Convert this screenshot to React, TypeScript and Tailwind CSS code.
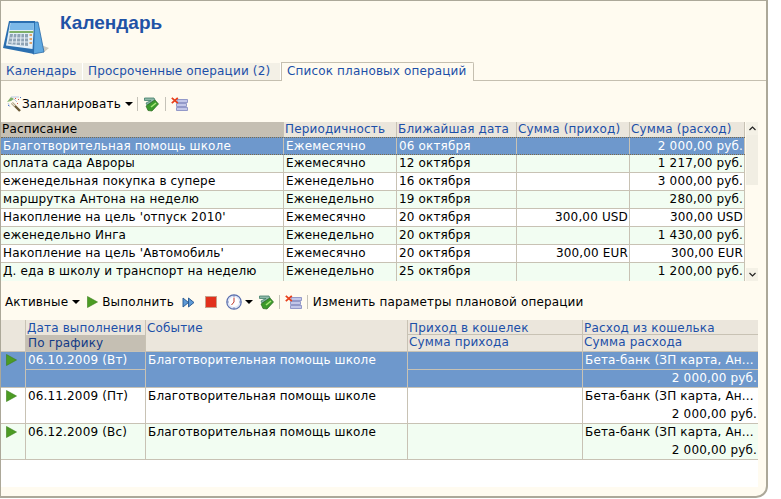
import React from "react"

const uiFont = "font-['DejaVu_Sans',Verdana,sans-serif] tracking-[0.15px]"

const planColumns = ["w-[283px]", "w-[113px]", "w-[120px]", "w-[113px]", "w-[115px]"]

const planRows = [
  ["Благотворительная помощь школе", "Ежемесячно", "06 октября", "", "2 000,00 руб."],
  ["оплата сада Авроры", "Ежемесячно", "12 октября", "", "1 217,00 руб."],
  ["еженедельная покупка в супере", "Еженедельно", "16 октября", "", "3 000,00 руб."],
  ["маршрутка Антона на неделю", "Еженедельно", "19 октября", "", "280,00 руб."],
  ["Накопление на цель 'отпуск 2010'", "Ежемесячно", "20 октября", "300,00 USD", "300,00 USD"],
  ["еженедельно Инга", "Еженедельно", "20 октября", "", "1 430,00 руб."],
  ["Накопление на цель 'Автомобиль'", "Ежемесячно", "20 октября", "300,00 EUR", "300,00 EUR"],
  ["Д. еда в школу и транспорт на неделю", "Еженедельно", "25 октября", "", "1 200,00 руб."],
]

const runRows = [
  { date: "06.10.2009 (Вт)", selected: true, bg: "bg-[#6e98cc] text-white" },
  { date: "06.11.2009 (Пт)", selected: false, bg: "bg-white text-black" },
  { date: "06.12.2009 (Вс)", selected: false, bg: "bg-[#f2fdf2] text-black" },
]

function CalendarIcon() {
  return (
    <svg width="48" height="40" viewBox="0 0 48 40" className="shrink-0">
      <path d="M38 27 L46 30 L40 35 Z" fill="#cfcabd" />
      <path d="M30 4 L35 4 L41 34 L30 36 Z" fill="#5fa8e0" stroke="#2a6aa8" strokeWidth="0.8" />
      <path d="M6 3 L32 3 L31 36 L0 30 Z" fill="#2b6fb0" />
      <path d="M7 5 L31 5 L29.5 31 L3 27.5 Z" fill="#e4f0f8" />
      <path d="M7.5 5 L31 5 L30.5 12 L6.5 12 Z" fill="#7cb9e8" />
      <path d="M6.5 13 L30.5 13 L30.4 15 L6.3 15 Z" fill="#7fb069" />
      <path d="M7 16 L25 16 L25 28 L5 26 Z" fill="#8ea3b5" />
      <path d="M10.5 16 L9 26 M14 16 L13 27 M18 16 L17.5 27 M21.5 16 L21.5 28 M6.5 20 L25 20 M6 24 L25 24" stroke="#e6eef5" strokeWidth="1" />
      <path d="M26.5 17 L29 17 M26.5 21 L29 21 M26.5 25 L29 25" stroke="#e08a3c" strokeWidth="1.4" />
    </svg>
  )
}

function WandIcon() {
  return (
    <svg width="16" height="16" viewBox="0 0 16 16" className="shrink-0">
      <path d="M6 7 L14 15" stroke="#6b5a36" strokeWidth="2.4" />
      <path d="M6 7 L9 10" stroke="#e8e0c8" strokeWidth="1.6" />
      <path d="M1 6 L5 1 L8 3 L5 5 Z" fill="#7fb069" />
      <path d="M5 1 L13 1 M8 3 L11 6 M2 7 L4 11" stroke="#b9c6e4" strokeWidth="1" />
      <path d="M9 2 h1 v1 h-1 Z M12 3 h1 v1 h-1 Z M11 7 h1 v1 h-1 Z" fill="#d9534f" />
      <path d="M2 9 h1 v1 h-1 Z M14 1 h1 v1 h-1 Z" fill="#4a78c4" />
    </svg>
  )
}

function CheckBookIcon() {
  return (
    <svg width="16" height="16" viewBox="0 0 16 16" className="shrink-0">
      <path d="M1.5 2 H11 L12 4 L5.5 8 L9 8 L4 9 L3 7 L8 4.5 H1.5 Z" fill="#8fb8a8" stroke="#3f7f68" strokeWidth="0.8" />
      <path d="M3 10 L12 4 L15.5 8 L9 15 L5 14.5 Z" fill="#3c9a2c" stroke="#2c6a22" strokeWidth="0.7" />
      <path d="M8 11 L13 7" fill="none" stroke="#a8e878" strokeWidth="1.6" />
    </svg>
  )
}

function DeleteListIcon() {
  return (
    <svg width="17" height="15" viewBox="0 0 17 15" className="shrink-0">
      <path d="M6 2.5 H16.5 V5.5 H6 Z" fill="#c2c6e8" stroke="#7f86c0" strokeWidth="0.8" />
      <path d="M5.5 6.5 H15.5 V9.5 H5.5 Z" fill="#c2c6e8" stroke="#7f86c0" strokeWidth="0.8" />
      <path d="M5.5 10.5 H16.5 V13.5 H5.5 Z" fill="#c2c6e8" stroke="#7f86c0" strokeWidth="0.8" />
      <path d="M0.8 0.8 L6.8 6.2 M6.8 0.8 L0.8 6.2" stroke="#e8401c" strokeWidth="1.8" />
    </svg>
  )
}

function PlayIcon() {
  return (
    <svg width="11" height="12" viewBox="0 0 11 12" className="shrink-0">
      <path d="M0.5 0.5 L10.5 6 L0.5 11.5 Z" fill="#4c9c24" stroke="#3a7f1c" strokeWidth="0.6" />
    </svg>
  )
}

function ForwardIcon() {
  return (
    <svg width="13" height="11" viewBox="0 0 13 11" className="shrink-0">
      <path d="M1 1 L6.5 5.5 L1 10 Z M6.5 1 L12 5.5 L6.5 10 Z" fill="#5e9ad6" stroke="#23558f" strokeWidth="0.9" />
    </svg>
  )
}

function StopIcon() {
  return <span className="w-3 h-3 shrink-0 bg-[#e2301c] border border-[#c8a08c]" />
}

function ClockIcon() {
  return (
    <svg width="16" height="16" viewBox="0 0 16 16" className="shrink-0">
      <circle cx="8" cy="8" r="7.2" fill="#dfe6f6" stroke="#5a6fae" strokeWidth="1.2" />
      <circle cx="8" cy="8" r="5" fill="#fff" />
      <path d="M8 3.5 V8 L5.5 11" fill="none" stroke="#c0392b" strokeWidth="1" />
      <path d="M8 1.5 v1 M8 13.5 v1 M1.5 8 h1 M13.5 8 h1" stroke="#3c4f8c" strokeWidth="1" />
    </svg>
  )
}

function Caret() {
  return <span className="w-0 h-0 shrink-0 border-x-[4px] border-x-transparent border-t-[4px] border-t-black" />
}

function Divider() {
  return <span className="w-px h-[14px] shrink-0 bg-[#c5c2b8]" />
}

function Tab({ label, active, width }: { label: string; active?: boolean; width: string }) {
  if (active) {
    return (
      <div className={`${width} h-[19px] -mb-px pl-[5px] bg-[#fffbf0] border border-b-0 border-[#c5bfb0] text-[#1c4fa8] leading-[17px] rounded-tr-[2px] whitespace-nowrap`}>
        {label}
      </div>
    )
  }
  return <div className={`${width} h-[17px] pl-[5px] bg-[#f3f0e6] border-r border-white text-[#1c4fa8] leading-[17px] whitespace-nowrap`}>{label}</div>
}

function PlanHeader() {
  const labels = ["Расписание", "Периодичность", "Ближайшая дата", "Сумма (приход)", "Сумма (расход)"]
  return (
    <div className="flex h-[15px] leading-[14px]">
      {labels.map((label, i) => (
        <div key={label} className={`${planColumns[i]} pl-[1px] border-r border-[#c8c2b4] ${i === 0 ? "bg-[#c5bfb3] text-black" : "bg-[#ebe6dc] text-[#1c4fa8]"}`}>
          {label}
        </div>
      ))}
    </div>
  )
}

function PlanRow({ row, index }: { row: string[]; index: number }) {
  const selected = index === 0
  const bg = selected ? "bg-[#6e98cc] text-white" : index % 2 === 1 ? "bg-[#f2fdf2] text-black" : "bg-white text-black"
  const edge = selected ? "border-y border-dotted border-[#7d6a48]" : index === 7 ? "" : "border-b border-[#c8c2b4]"
  return (
    <div className={`flex h-[18px] leading-[17px] ${bg} ${edge}`}>
      {row.map((cell, i) => (
        <div key={i} className={`${planColumns[i]} whitespace-nowrap overflow-hidden border-r border-[#c8c2b4] ${i >= 3 ? "pr-[1px] text-right" : "pl-[2px]"}`}>
          {cell}
        </div>
      ))}
    </div>
  )
}

function Scrollbar() {
  return (
    <div className="w-3 ml-[1px] flex flex-col">
      <div className="h-[13px] flex items-center justify-center bg-[#f4f1e6] text-black">
        <svg width="7" height="5" viewBox="0 0 7 5"><path d="M0.5 4 L3.5 1 L6.5 4" fill="none" stroke="#222" strokeWidth="1.2" /></svg>
      </div>
      <div className="h-[50px] bg-[#f1eee3]" />
      <div className="flex-1 bg-[#fffbf0]" />
      <div className="h-[13px] flex items-center justify-center bg-[#f4f1e6]">
        <svg width="7" height="5" viewBox="0 0 7 5"><path d="M0.5 1 L3.5 4 L6.5 1" fill="none" stroke="#222" strokeWidth="1.2" /></svg>
      </div>
    </div>
  )
}

function RunTable() {
  const cell = "border-r border-[#c8c2b4]"
  return (
    <div className="w-[757px] flex-1 bg-white">
      <div className="flex h-[32px] bg-[#ebe6dc] text-[#1c4fa8] border-b border-[#c8c2b4]">
        <div className={`w-[25px] ${cell}`} />
        <div className={`w-[120px] flex flex-col ${cell}`}>
          <div className="h-[15px] pl-[1px] leading-[16px]">Дата выполнения</div>
          <div className="h-[16px] pl-[2px] bg-[#c5bfb3] text-[#123a86] leading-[16px]">По графику</div>
        </div>
        <div className={`w-[262px] pl-[1px] leading-[16px] ${cell}`}>Событие</div>
        <div className={`w-[175px] flex flex-col ${cell}`}>
          <div className="h-[15px] pl-[1px] leading-[16px] border-b border-[#c8c2b4]">Приход в кошелек</div>
          <div className="pl-[1px] leading-[15px]">Сумма прихода</div>
        </div>
        <div className="w-[175px] flex flex-col">
          <div className="h-[15px] pl-[1px] leading-[16px] border-b border-[#c8c2b4]">Расход из кошелька</div>
          <div className="pl-[1px] leading-[15px]">Сумма расхода</div>
        </div>
      </div>
      {runRows.map((row) => (
        <div key={row.date} className={`flex h-[36px] border-b border-[#c8c2b4] ${row.bg}`}>
          <div className={`w-[25px] pl-[5px] pt-[2px] ${cell}`}>
            <PlayIcon />
          </div>
          <div className={`w-[120px] flex flex-col ${cell}`}>
            <div className={`h-[18px] pl-[2px] leading-[16px] ${row.selected ? "border-b border-[#c8c2b4]" : ""}`}>{row.date}</div>
          </div>
          <div className={`w-[262px] pl-[2px] leading-[16px] whitespace-nowrap ${cell}`}>Благотворительная помощь школе</div>
          <div className={`w-[175px] ${cell}`}>
            {row.selected && <div className="h-[18px] border-b border-[#c8c2b4]" />}
          </div>
          <div className="w-[175px] flex flex-col">
            <div className={`h-[18px] pl-[2px] leading-[16px] whitespace-nowrap ${row.selected ? "border-b border-[#c8c2b4]" : ""}`}>Бета-банк (ЗП карта, Ан...</div>
            <div className="pr-[1px] text-right leading-[17px] whitespace-nowrap">2 000,00 руб.</div>
          </div>
        </div>
      ))}
    </div>
  )
}

export default function App() {
  return (
    <div className={`w-[781px] h-[499px] bg-white text-[12px] text-black ${uiFont}`}>
      <div className="w-[768px] h-[498px] flex flex-col bg-[#fffbf0] border border-r-2 border-b-2 border-[#aca899] rounded-br-[12px] overflow-hidden">
        <div className="h-[61px] flex items-start pl-[2px] pt-[11px] gap-[9px]">
          <div className="pt-[6px]">
            <CalendarIcon />
          </div>
          <h1 className="text-[19px] leading-[22px] tracking-normal font-bold text-[#1f53a6] font-['Liberation_Sans',Arial,sans-serif]">Календарь</h1>
        </div>
        <div className="flex items-end h-[19px] border-b border-[#c5bfb0]">
          <Tab label="Календарь" width="w-[82px]" />
          <Tab label="Просроченные операции (2)" width="w-[198px]" />
          <Tab label="Список плановых операций" width="w-[193px]" active />
        </div>
        <div className="h-[41px] flex items-center pl-[5px] pt-[5px]">
          <WandIcon />
          <span>Запланировать</span>
          <span className="ml-[4px] flex"><Caret /></span>
          <span className="ml-[4px] flex"><Divider /></span>
          <span className="ml-[5px]"><CheckBookIcon /></span>
          <span className="ml-[6px] flex"><Divider /></span>
          <span className="ml-[5px]"><DeleteListIcon /></span>
        </div>
        <div className="h-[159px] flex">
          <div className="w-[744px]">
            <PlanHeader />
            {planRows.map((row, i) => (
              <PlanRow key={row[0]} row={row} index={i} />
            ))}
          </div>
          <Scrollbar />
        </div>
        <div className="h-[39px] flex items-center pl-[4px] pt-[3px]">
          <span>Активные</span>
          <span className="ml-[4px] flex"><Caret /></span>
          <span className="ml-[7px]"><PlayIcon /></span>
          <span className="ml-[4px]">Выполнить</span>
          <span className="ml-[8px]"><ForwardIcon /></span>
          <span className="ml-[10px] flex"><StopIcon /></span>
          <span className="ml-[9px]"><ClockIcon /></span>
          <span className="ml-[3px] flex"><Caret /></span>
          <span className="ml-[5px]"><CheckBookIcon /></span>
          <span className="ml-[5px] flex"><Divider /></span>
          <span className="ml-[5px]"><DeleteListIcon /></span>
          <span className="ml-[5px] flex"><Divider /></span>
          <span className="ml-[5px]">Изменить параметры плановой операции</span>
        </div>
        <RunTable />
        <div className="h-[9px]" />
      </div>
    </div>
  )
}
